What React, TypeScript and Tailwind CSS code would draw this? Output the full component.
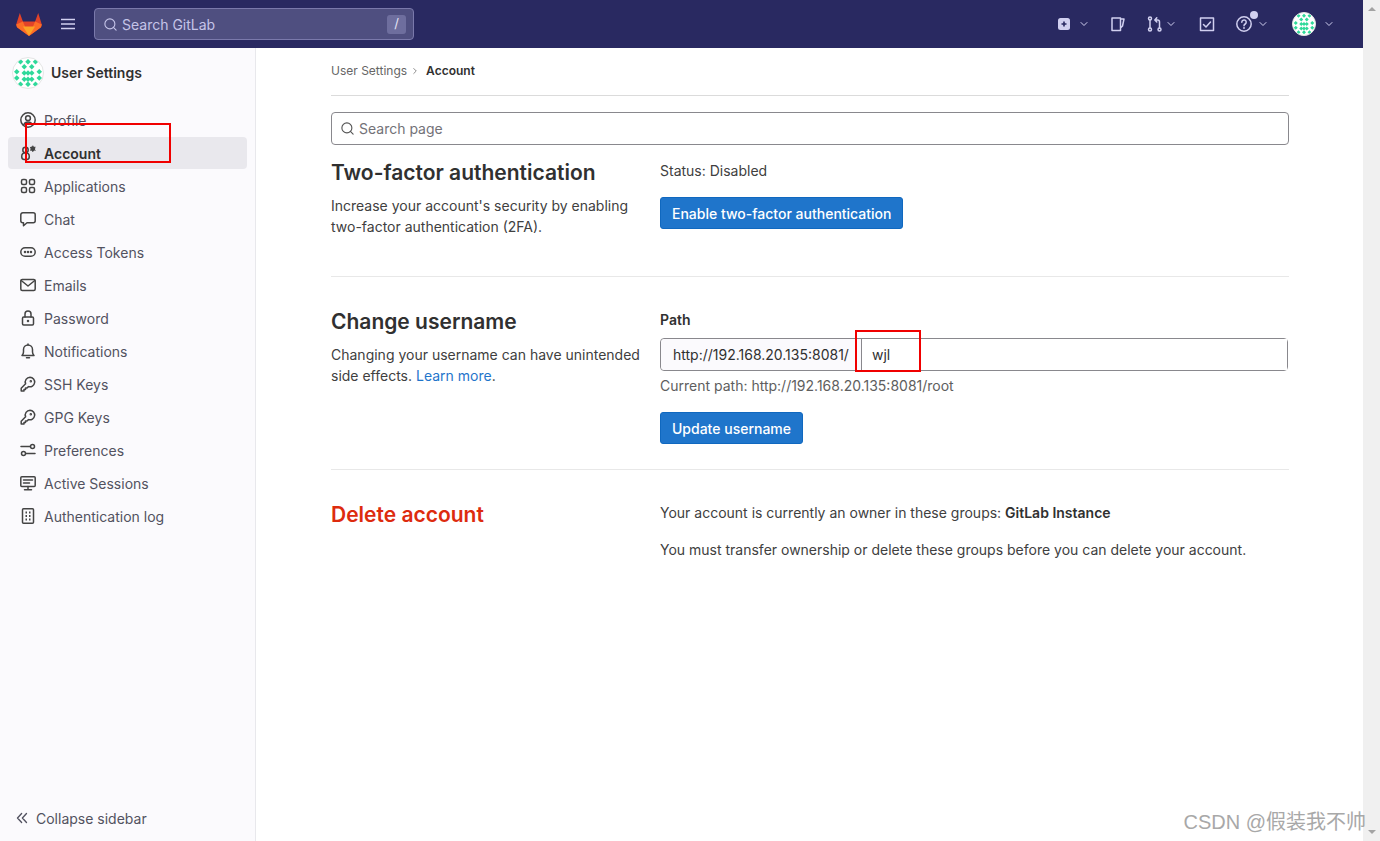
import { ChevronDown, ChevronRight, Search } from 'lucide-react';
import type { ReactNode } from 'react';

function Glyph({ children, className = '' }: { children: ReactNode; className?: string }) {
  return (
    <svg
      viewBox="0 0 16 16"
      fill="none"
      stroke="currentColor"
      strokeWidth={1.5}
      strokeLinecap="round"
      strokeLinejoin="round"
      className={`h-4 w-4 shrink-0 ${className}`}
    >
      {children}
    </svg>
  );
}

const navIcons: Record<string, ReactNode> = {
  Profile: (
    <>
      <circle cx="8" cy="8" r="7.2" />
      <circle cx="8" cy="6.2" r="2.4" />
      <path d="M3.6 13c.8-2 2.4-3 4.4-3s3.600 1 4.400 3" />
    </>
  ),
  Account: (
    <>
      <circle cx="5.500" cy="5" r="2.700" />
      <path d="M5.500 7.700c-2.500 0-3.800 1.700-3.800 3.800 0 2 1 3 2.500 3h2.600c1.500 0 2.500-1 2.500-3 0-2.100-1.300-3.800-3.800-3.800z" />
      <circle cx="12.800" cy="3.800" r="1.700" fill="currentColor" />
      <path d="M12.800 1v5.600M10.400 2.400l4.800 2.800M15.200 2.400l-4.800 2.800" strokeWidth={1} />
    </>
  ),
  Applications: (
    <>
      <rect x="1.500" y="1.500" width="5" height="5" rx="1.500" />
      <rect x="9.500" y="1.500" width="5" height="5" rx="1.500" />
      <rect x="1.500" y="9.500" width="5" height="5" rx="1.500" />
      <rect x="9.500" y="9.500" width="5" height="5" rx="1.500" />
    </>
  ),
  Chat: <path d="M2.800 1.800h10.400a2 2 0 0 1 2 2v6a2 2 0 0 1-2 2H7l-3.500 3v-3h-.7a2 2 0 0 1-2-2v-6a2 2 0 0 1 2-2z" />,
  'Access Tokens': (
    <>
      <rect x="0.800" y="3.700" width="14.400" height="8.600" rx="4.300" />
      <circle cx="5" cy="8" r="0.500" />
      <circle cx="8" cy="8" r="0.500" />
      <circle cx="11" cy="8" r="0.500" />
    </>
  ),
  Emails: (
    <>
      <rect x="0.800" y="2.500" width="14.400" height="11" rx="1.500" />
      <path d="M1.200 3.500 8 9l6.800-5.500" />
    </>
  ),
  Password: (
    <>
      <rect x="2.500" y="7" width="11" height="8" rx="1.200" />
      <path d="M5 7V4a3 3 0 0 1 6 0v3" />
      <circle cx="8" cy="11" r="0.500" />
    </>
  ),
  Notifications: (
    <>
      <path d="M2 12.500c1-1 1.500-2 1.500-3.500V6.500a4.500 4.500 0 0 1 9 0V9c0 1.500.5 2.500 1.500 3.500z" />
      <path d="M6.500 14.800h3" />
      <path d="M8 1v1" />
    </>
  ),
  'SSH Keys': (
    <>
      <path d="M10 1.200a4.800 4.800 0 1 1-1.500 9.400l-1.500 1.400H5.500v1.500H4v1.500H1.200v-2.800l4.400-4.400A4.800 4.800 0 0 1 10 1.200z" />
      <circle cx="10.800" cy="5.200" r="0.500" />
    </>
  ),
  'GPG Keys': (
    <>
      <path d="M10 1.200a4.800 4.800 0 1 1-1.500 9.400l-1.500 1.400H5.500v1.500H4v1.500H1.200v-2.800l4.400-4.400A4.800 4.800 0 0 1 10 1.200z" />
      <circle cx="10.800" cy="5.200" r="0.500" />
    </>
  ),
  Preferences: (
    <>
      <circle cx="12.500" cy="4.500" r="2" />
      <circle cx="3.500" cy="11.500" r="2" />
      <path d="M1 4.500h9M6 11.500h9" />
    </>
  ),
  'Active Sessions': (
    <>
      <rect x="0.800" y="1.800" width="14.400" height="9.700" rx="1" />
      <path d="M3.500 5h9M3.500 8h6M8 11.500v3M4.500 14.800h7" />
    </>
  ),
  'Authentication log': (
    <>
      <rect x="2.500" y="0.800" width="11" height="14.400" rx="1" />
      <path d="M5.500 4.500h1.500M9 4.500h1.500M5.500 8h1.500M9 8h1.500M5.500 11.500h1.500M9 11.500h1.500" strokeLinecap="butt" strokeWidth={2} />
    </>
  ),
};

const navItems = Object.keys(navIcons);

function Identicon({ size }: { size: number }) {
  const cells = [
    [6, 3], [12, 3], [18, 3], [9, 7], [15, 7], [3, 11], [21, 11],
    [9, 12], [15, 12], [12, 12], [9, 17], [15, 17], [12, 17], [3, 16], [21, 16], [6, 21], [12, 21], [18, 21],
  ];
  return (
    <svg viewBox="0 0 24 24" width={size} height={size} className="shrink-0 rounded-full border border-[#e5e5e5] bg-white">
      {cells.map(([x, y]) => (
        <path key={`${x}-${y}`} d={`M${x} ${y - 2.200}L${x + 2.200} ${y}L${x} ${y + 2.200}L${x - 2.200} ${y}Z`} fill="#2ed99a" />
      ))}
    </svg>
  );
}

function GitlabLogo() {
  return (
    <svg viewBox="0 0 26 24" className="h-[24px] w-[26px]">
      <path d="M13 24 1 15.200.2 12.500 3.800 1l3.100 8.500h12.200L22.200 1l3.600 11.500-.8 2.700z" fill="#e24329" />
      <path d="M13 24 6.900 9.500.2 12.500l.8 2.700z" fill="#fc6d26" />
      <path d="M13 24l6.100-14.500 6.700 3-.8 2.700z" fill="#fc6d26" />
      <path d="M13 24 6.900 14.500h12.200z" fill="#fca326" />
    </svg>
  );
}

function TopBar() {
  return (
    <header className="flex h-12 shrink-0 items-center bg-[#292961] pl-[16px] pr-[28px] text-[#d1d0f0]">
      <GitlabLogo />
      <Glyph className="ml-[18px] text-[#d1d0f0]">
        <path d="M1 3.500h14M1 8h14M1 12.500h14" strokeWidth={1.300} strokeLinecap="butt" />
      </Glyph>
      <div className="ml-[18px] flex h-8 w-[320px] items-center rounded-[4px] border border-[#7a79ab] bg-[#4f4f80] pl-2 pr-[7px] text-[#c5c4e8]">
        <Search className="h-[15px] w-[15px]" strokeWidth={1.800} />
        <span className="ml-[4px] text-[14px]">Search GitLab</span>
        <span className="ml-auto flex h-[19px] w-[19px] items-center justify-center rounded-[3px] bg-[#6e6e9e] text-[13px] text-[#e3e3f5]">/</span>
      </div>
      <div className="ml-auto flex items-center">
        <svg viewBox="0 0 12 12" className="h-3 w-3">
          <rect width="12" height="12" rx="2.500" fill="#d1d0f0" />
          <path d="M6 3.500v5M3.500 6h5" stroke="#292961" strokeWidth={1.600} />
        </svg>
        <ChevronDown className="ml-[8px] h-[12px] w-[12px]" strokeWidth={2} />
        <Glyph className="ml-[20px]">
          <path d="M2 2h8.500v12.500H2zM10.500 3h3.500l-1.500 7-2 2" />
        </Glyph>
        <Glyph className="ml-[21px]">
          <circle cx="3" cy="2.500" r="1.500" />
          <circle cx="3" cy="13.500" r="1.500" />
          <circle cx="12.500" cy="13.500" r="1.500" />
          <path d="M3 4v8M12.500 12V6a2 2 0 0 0-2-2H8M9.800 1.800 7.800 4l2 2" />
        </Glyph>
        <ChevronDown className="ml-[2px] h-[12px] w-[12px]" strokeWidth={2} />
        <Glyph className="ml-[22px]">
          <path d="M1.500 2h13v12.500h-13z" />
          <path d="M4.500 8.500 7 11l4.500-5" />
        </Glyph>
        <div className="relative ml-[21px] h-4 w-4">
          <Glyph>
            <circle cx="8" cy="8" r="7.200" />
            <path d="M5.800 6.200a2.200 2.200 0 1 1 3.400 1.800C8.400 8.500 8 9 8 9.800" />
            <circle cx="8" cy="12" r="0.300" />
          </Glyph>
          <span className="absolute -right-[6px] -top-[5px] h-[8px] w-[8px] rounded-full bg-[#d1d0f0]" />
        </div>
        <ChevronDown className="ml-[5px] h-[12px] w-[12px]" strokeWidth={2} />
        <div className="ml-[23px]">
          <Identicon size={24} />
        </div>
        <ChevronDown className="ml-[7px] h-[12px] w-[12px]" strokeWidth={2} />
      </div>
    </header>
  );
}

function Sidebar() {
  return (
    <aside className="flex w-[256px] shrink-0 flex-col border-r border-[#e8e8ec] bg-[#fbfafd] text-[14px] text-[#525260]">
      <div className="mb-[8px] ml-[12px] flex h-[48px] items-center pt-[1px]">
        <Identicon size={32} />
        <span className="ml-[7px] text-[14px] font-semibold text-[#303030]">User Settings</span>
      </div>
      <nav className="flex flex-col gap-px pl-[8px] pr-[8px]">
        {navItems.map((name) => (
          <a
            key={name}
            className={`flex h-[32px] items-center rounded-[4px] pl-[12px] ${
              name === 'Account' ? 'bg-[#e9e8ed] font-semibold text-[#303030]' : ''
            }`}
          >
            <span className="text-[#444]">
              <Glyph>{navIcons[name]}</Glyph>
            </span>
            <span className="ml-[8px]">{name}</span>
          </a>
        ))}
      </nav>
      <div className="mt-auto flex h-[46px] items-center pl-[16px]">
        <Glyph className="h-[12px] w-[12px]">
          <path d="M7.500 2 2 8l5.500 6M14 2 8.500 8l5.500 6" strokeWidth={1.800} />
        </Glyph>
        <span className="ml-[8px]">Collapse sidebar</span>
      </div>
    </aside>
  );
}

function PrimaryButton({ children }: { children: ReactNode }) {
  return (
    <button className="flex h-[32px] items-center rounded-[3px] border border-[#1068bf] bg-[#1f75cb] px-[11px] text-[14px] font-medium text-white">
      {children}
    </button>
  );
}

function Content() {
  return (
    <main className="min-w-0 flex-1 pl-[75px] pr-[74px] text-[14px] text-[#404040]">
      <div className="flex h-[48px] items-center border-b border-[#dbdbdb] pb-[1px] text-[12px]">
        <span className="text-[#666]">User Settings</span>
        <ChevronRight className="ml-[3px] h-[10px] w-[10px] text-[#777]" />
        <span className="ml-[6px] font-semibold text-[#303030]">Account</span>
      </div>
      <div className="mt-[16px] flex h-[33px] items-center rounded-[4px] border border-[#89888d] bg-white pl-[8px] text-[#737278]">
        <Search className="h-[15px] w-[15px] text-[#555]" strokeWidth={1.800} />
        <span className="ml-[4px]">Search page</span>
      </div>

      <section className="grid h-[132px] grid-cols-[329px_1fr] border-b border-[#e8e8e8]">
        <div>
          <h4 className="mt-[14px] text-[21px] font-semibold leading-[28px] text-[#303030]">Two-factor authentication</h4>
          <p className="mt-[8px] leading-[21px]">Increase your account's security by enabling two-factor authentication (2FA).</p>
        </div>
        <div>
          <p className="mt-[16px] leading-[20px]">Status: Disabled</p>
          <div className="mt-[16px]">
            <PrimaryButton>Enable two-factor authentication</PrimaryButton>
          </div>
        </div>
      </section>

      <section className="grid h-[193px] grid-cols-[329px_1fr] border-b border-[#e8e8e8]">
        <div>
          <h4 className="mt-[31px] text-[21px] font-semibold leading-[28px] text-[#303030]">Change username</h4>
          <p className="mt-[8px] leading-[21px]">
            Changing your username can have unintended side effects. <span className="text-[#1f75cb]">Learn more</span>.
          </p>
        </div>
        <div>
          <p className="mt-[33px] font-semibold leading-[20px] text-[#303030]">Path</p>
          <div className="mt-[8px] flex h-[33px] w-[628px] rounded-[4px] border border-[#89888d] text-[#303030]">
            <div className="flex w-[201px] items-center rounded-l-[4px] border-r border-[#89888d] bg-[#fbfafd] pl-[12px]">
              http://192.168.20.135:8081/
            </div>
            <div className="flex flex-1 items-center bg-white pl-[10px]">wjl</div>
          </div>
          <p className="mt-[5px] leading-[20px] text-[#5e5e5e]">Current path: http://192.168.20.135:8081/root</p>
          <div className="mt-[16px]">
            <PrimaryButton>Update username</PrimaryButton>
          </div>
        </div>
      </section>

      <section className="grid grid-cols-[329px_1fr]">
        <h4 className="mt-[31px] text-[21px] font-semibold leading-[28px] text-[#dd2b0e]">Delete account</h4>
        <div>
          <p className="mt-[33px] leading-[20px]">
            Your account is currently an owner in these groups: <strong className="font-semibold text-[#303030]">GitLab Instance</strong>
          </p>
          <p className="mt-[17px] leading-[20px]">You must transfer ownership or delete these groups before you can delete your account.</p>
        </div>
      </section>
    </main>
  );
}

function Scrollbar() {
  return (
    <div className="flex w-[17px] shrink-0 flex-col items-center justify-between bg-[#f0f0f0] py-[7px]">
      <span className="h-0 w-0 border-x-[4px] border-b-[4px] border-x-transparent border-b-[#a3a3a3]" />
      <span className="h-0 w-0 border-x-[4px] border-t-[4px] border-x-transparent border-t-[#a3a3a3]" />
    </div>
  );
}

export default function App() {
  return (
    <div className="relative flex h-[841px] w-[1380px] overflow-hidden bg-white font-['Inter',sans-serif]">
      <div className="flex min-w-0 flex-1 flex-col">
        <TopBar />
        <div className="flex min-h-0 flex-1">
          <Sidebar />
          <Content />
        </div>
      </div>
      <Scrollbar />
      {/* annotation boxes drawn on top of the screenshot */}
      <div className="absolute left-[25px] top-[123px] h-[40px] w-[146px] border-2 border-[#f00000]" />
      <div className="absolute left-[855px] top-[330px] h-[42px] w-[66px] border-2 border-[#f00000]" />
      <div className="absolute right-[14px] top-[809px] font-['Liberation_Sans','Noto_Sans_CJK_SC',sans-serif] text-[20px] leading-[26px] text-[#a8a8a8]">
        CSDN @假装我不帅
      </div>
    </div>
  );
}
